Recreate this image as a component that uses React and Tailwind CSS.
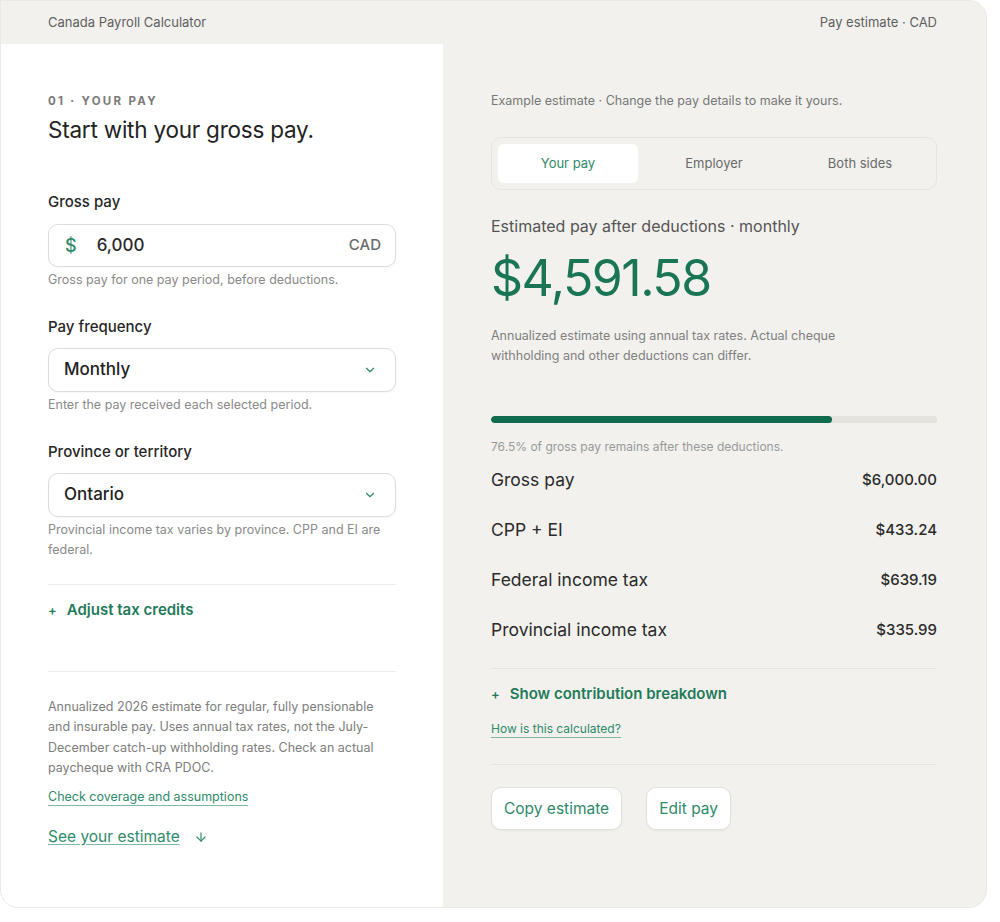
import React from 'react';
import { ChevronDown, ArrowDown } from 'lucide-react';

const font = { fontFamily: 'Inter, "Noto Sans", sans-serif' };

function SelectBox({ value }) {
  return (
    <div className="flex h-[44px] items-center justify-between rounded-[10px] border border-[#dedcd6] bg-white pl-[15px] pr-[18px] shadow-[0_1px_2px_rgba(0,0,0,0.04)]">
      <span className="text-[17px] font-medium text-[#222]">{value}</span>
      <ChevronDown className="h-[14px] w-[14px] text-[#2f8a6a]" strokeWidth={2} />
    </div>
  );
}

function Row({ label, value }) {
  return (
    <div className="flex h-[50px] items-center justify-between">
      <span className="text-[17.5px] text-[#2b2b2b]">{label}</span>
      <span className="text-[15px] font-medium text-[#2b2b2b]">{value}</span>
    </div>
  );
}

export default function App() {
  return (
    <div className="min-h-screen bg-white" style={font}>
      <div className="w-[987px] h-[908px] overflow-hidden rounded-br-[18px] rounded-tr-[18px] rounded-bl-[18px] border border-[#ebe9e4] bg-[#f2f1ed] flex flex-col">
        {/* top bar */}
        <div className="flex h-[43px] shrink-0 items-center justify-between pl-[47px] pr-[49px] text-[13px] text-[#5f5f5f]">
          <span>Canada Payroll Calculator</span>
          <span>Pay estimate · CAD</span>
        </div>

        <div className="flex flex-1">
          {/* left: inputs */}
          <div className="w-[442px] shrink-0 rounded-bl-[16px] bg-white pl-[47px] pr-[47px] pt-[49px]">
            <div className="text-[11.5px] font-bold leading-4 tracking-[0.2em] text-[#7a7a7a]">01 · YOUR PAY</div>
            <h1 className="mt-[7px] text-[22.5px] leading-7 tracking-[-0.01em] text-[#232323]">Start with your gross pay.</h1>

            <div className="mt-[48px] text-[15px] font-medium leading-5 text-[#262626]">Gross pay</div>
            <div className="mt-3 flex h-[43px] items-center rounded-[10px] border border-[#dedcd6] bg-white pl-[16px] pr-[14px] shadow-[0_1px_2px_rgba(0,0,0,0.04)]">
              <span className="text-[18px] font-medium text-[#2f8a6a]">$</span>
              <span className="ml-[20px] text-[17px] font-medium text-[#2a2a2a]">6,000</span>
              <span className="ml-auto text-[15px] font-medium text-[#6a6a6a]">CAD</span>
            </div>
            <p className="mt-[5px] text-[12.5px] leading-4 text-[#8a8a8a]">Gross pay for one pay period, before deductions.</p>

            <div className="mt-[29px] text-[15px] font-medium leading-5 text-[#262626]">Pay frequency</div>
            <div className="mt-[11px]"><SelectBox value="Monthly" /></div>
            <p className="mt-[5px] text-[12.5px] leading-4 text-[#8a8a8a]">Enter the pay received each selected period.</p>

            <div className="mt-[29px] text-[15px] font-medium leading-5 text-[#262626]">Province or territory</div>
            <div className="mt-[11px]"><SelectBox value="Ontario" /></div>
            <p className="mt-[3px] text-[12.5px] leading-5 text-[#8a8a8a]">Provincial income tax varies by province. CPP and EI are<br />federal.</p>

            <div className="mt-[24px] border-t border-[#eeece8]" />
            <button className="mt-[15px] flex items-center gap-[10px] text-[15px] font-semibold leading-5 text-[#1f7a5a]">
              <span className="text-[13px]">+</span>
              <span>Adjust tax credits</span>
            </button>
            <div className="mt-[51px] border-t border-[#eeece8]" />

            <p className="mt-[25px] whitespace-nowrap text-[12.5px] leading-[20.3px] text-[#7d7d7d]">
              Annualized 2026 estimate for regular, fully pensionable<br />
              and insurable pay. Uses annual tax rates, not the July-<br />
              December catch-up withholding rates. Check an actual<br />
              paycheque with CRA PDOC.
            </p>
            <a className="mt-[11px] inline-block border-b border-[#7fb8a2] text-[12.5px] leading-4 text-[#2f8a6a]">Check coverage and assumptions</a>
            <div className="mt-[20px] flex items-center gap-[14px] leading-5">
              <a className="text-[15.5px] text-[#2f8a6a] underline decoration-[#7fb8a2] underline-offset-2">See your estimate</a>
              <ArrowDown className="h-[14px] w-[14px] text-[#2f8a6a]" strokeWidth={2} />
            </div>
          </div>

          {/* right: results */}
          <div className="flex-1 pl-[48px] pr-[49px] pt-[49px]">
            <p className="text-[12.5px] leading-4 text-[#777]">Example estimate · Change the pay details to make it yours.</p>

            <div className="mt-[28px] grid h-[53px] grid-cols-3 gap-[6px] rounded-[10px] border border-[#e6e4df] p-[6px] text-[13px]">
              <div className="flex items-center justify-center rounded-[6px] bg-white text-[#2f8a6a]">Your pay</div>
              <div className="flex items-center justify-center text-[#6a6a6a]">Employer</div>
              <div className="flex items-center justify-center text-[#6a6a6a]">Both sides</div>
            </div>

            <p className="mt-[24px] text-[16px] leading-6 text-[#555]">Estimated pay after deductions · monthly</p>
            <div className="mt-[15px] text-[50px] font-normal leading-none tracking-[-0.03em] text-[#1a7556]">$4,591.58</div>

            <p className="mt-[23px] text-[12.5px] leading-5 text-[#808080]">
              Annualized estimate using annual tax rates. Actual cheque<br />withholding and other deductions can differ.
            </p>

            <div className="mt-[50px] h-[7px] w-full overflow-hidden rounded-full bg-[#e5e3de]">
              <div className="h-full rounded-full bg-[#0e6b4e]" style={{ width: '76.5%' }} />
            </div>
            <p className="mt-[16px] text-[12px] leading-4 text-[#999]">76.5% of gross pay remains after these deductions.</p>

            <div className="mt-0">
              <Row label="Gross pay" value="$6,000.00" />
              <Row label="CPP + EI" value="$433.24" />
              <Row label="Federal income tax" value="$639.19" />
              <Row label="Provincial income tax" value="$335.99" />
            </div>

            <div className="mt-[13px] border-t border-[#e6e4df]" />
            <button className="mt-[15px] flex items-center gap-[10px] text-[15px] font-semibold leading-5 text-[#1f7a5a]">
              <span className="text-[13px]">+</span>
              <span>Show contribution breakdown</span>
            </button>
            <a className="mt-[17px] inline-block border-b border-[#7fb8a2] text-[12px] leading-4 text-[#2f8a6a]">How is this calculated?</a>
            <div className="mt-[25px] border-t border-[#e6e4df]" />

            <div className="mt-[22px] flex gap-[24px]">
              <button className="h-[43px] rounded-[10px] border border-[#e2e0da] bg-white px-[12px] text-[15.5px] text-[#2f8a6a] shadow-[0_1px_2px_rgba(0,0,0,0.05)]">Copy estimate</button>
              <button className="h-[43px] rounded-[10px] border border-[#e2e0da] bg-white px-[12px] text-[15.5px] text-[#2f8a6a] shadow-[0_1px_2px_rgba(0,0,0,0.05)]">Edit pay</button>
            </div>
          </div>
        </div>
      </div>
    </div>
  );
}
